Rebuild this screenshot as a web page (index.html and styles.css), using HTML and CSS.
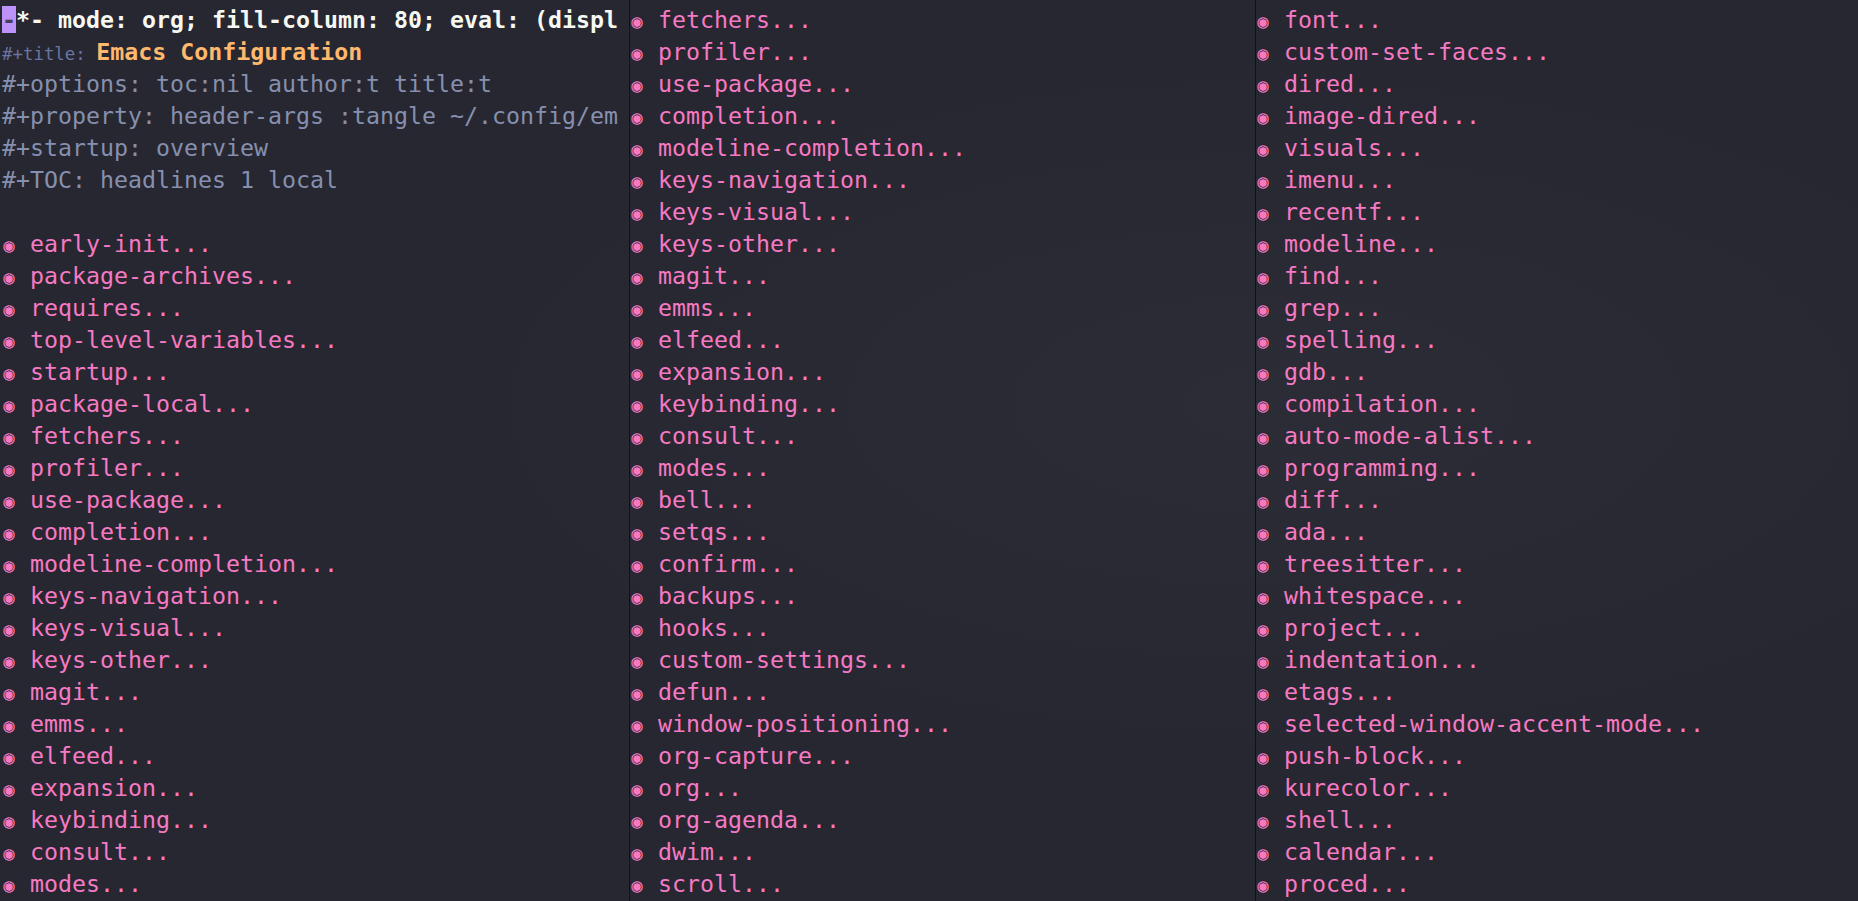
FILE: index.html
```html
<!DOCTYPE html>
<html lang="en">
<head>
<meta charset="utf-8">
<title>Emacs Configuration</title>
<link rel="stylesheet" href="styles.css">
</head>
<body>
<div class="frame">
  <section class="pane pane-left">
    <div class="line header"><span class="cursor">-</span>*- mode: org; fill-column: 80; eval: (displ</div>
    <div class="line"><span class="kw-title">#+title: </span><span class="doc-title">Emacs Configuration</span></div>
    <div class="line meta">#+options: toc:nil author:t title:t</div>
    <div class="line meta">#+property: header-args :tangle ~/.config/em</div>
    <div class="line meta">#+startup: overview</div>
    <div class="line meta">#+TOC: headlines 1 local</div>
    <div class="line"></div>
    <div class="line item"><span class="bullet">◉</span> early-init...</div>
    <div class="line item"><span class="bullet">◉</span> package-archives...</div>
    <div class="line item"><span class="bullet">◉</span> requires...</div>
    <div class="line item"><span class="bullet">◉</span> top-level-variables...</div>
    <div class="line item"><span class="bullet">◉</span> startup...</div>
    <div class="line item"><span class="bullet">◉</span> package-local...</div>
    <div class="line item"><span class="bullet">◉</span> fetchers...</div>
    <div class="line item"><span class="bullet">◉</span> profiler...</div>
    <div class="line item"><span class="bullet">◉</span> use-package...</div>
    <div class="line item"><span class="bullet">◉</span> completion...</div>
    <div class="line item"><span class="bullet">◉</span> modeline-completion...</div>
    <div class="line item"><span class="bullet">◉</span> keys-navigation...</div>
    <div class="line item"><span class="bullet">◉</span> keys-visual...</div>
    <div class="line item"><span class="bullet">◉</span> keys-other...</div>
    <div class="line item"><span class="bullet">◉</span> magit...</div>
    <div class="line item"><span class="bullet">◉</span> emms...</div>
    <div class="line item"><span class="bullet">◉</span> elfeed...</div>
    <div class="line item"><span class="bullet">◉</span> expansion...</div>
    <div class="line item"><span class="bullet">◉</span> keybinding...</div>
    <div class="line item"><span class="bullet">◉</span> consult...</div>
    <div class="line item"><span class="bullet">◉</span> modes...</div>
  </section>
  <section class="pane pane-mid">
    <div class="line item"><span class="bullet">◉</span> fetchers...</div>
    <div class="line item"><span class="bullet">◉</span> profiler...</div>
    <div class="line item"><span class="bullet">◉</span> use-package...</div>
    <div class="line item"><span class="bullet">◉</span> completion...</div>
    <div class="line item"><span class="bullet">◉</span> modeline-completion...</div>
    <div class="line item"><span class="bullet">◉</span> keys-navigation...</div>
    <div class="line item"><span class="bullet">◉</span> keys-visual...</div>
    <div class="line item"><span class="bullet">◉</span> keys-other...</div>
    <div class="line item"><span class="bullet">◉</span> magit...</div>
    <div class="line item"><span class="bullet">◉</span> emms...</div>
    <div class="line item"><span class="bullet">◉</span> elfeed...</div>
    <div class="line item"><span class="bullet">◉</span> expansion...</div>
    <div class="line item"><span class="bullet">◉</span> keybinding...</div>
    <div class="line item"><span class="bullet">◉</span> consult...</div>
    <div class="line item"><span class="bullet">◉</span> modes...</div>
    <div class="line item"><span class="bullet">◉</span> bell...</div>
    <div class="line item"><span class="bullet">◉</span> setqs...</div>
    <div class="line item"><span class="bullet">◉</span> confirm...</div>
    <div class="line item"><span class="bullet">◉</span> backups...</div>
    <div class="line item"><span class="bullet">◉</span> hooks...</div>
    <div class="line item"><span class="bullet">◉</span> custom-settings...</div>
    <div class="line item"><span class="bullet">◉</span> defun...</div>
    <div class="line item"><span class="bullet">◉</span> window-positioning...</div>
    <div class="line item"><span class="bullet">◉</span> org-capture...</div>
    <div class="line item"><span class="bullet">◉</span> org...</div>
    <div class="line item"><span class="bullet">◉</span> org-agenda...</div>
    <div class="line item"><span class="bullet">◉</span> dwim...</div>
    <div class="line item"><span class="bullet">◉</span> scroll...</div>
  </section>
  <section class="pane pane-right">
    <div class="line item"><span class="bullet">◉</span> font...</div>
    <div class="line item"><span class="bullet">◉</span> custom-set-faces...</div>
    <div class="line item"><span class="bullet">◉</span> dired...</div>
    <div class="line item"><span class="bullet">◉</span> image-dired...</div>
    <div class="line item"><span class="bullet">◉</span> visuals...</div>
    <div class="line item"><span class="bullet">◉</span> imenu...</div>
    <div class="line item"><span class="bullet">◉</span> recentf...</div>
    <div class="line item"><span class="bullet">◉</span> modeline...</div>
    <div class="line item"><span class="bullet">◉</span> find...</div>
    <div class="line item"><span class="bullet">◉</span> grep...</div>
    <div class="line item"><span class="bullet">◉</span> spelling...</div>
    <div class="line item"><span class="bullet">◉</span> gdb...</div>
    <div class="line item"><span class="bullet">◉</span> compilation...</div>
    <div class="line item"><span class="bullet">◉</span> auto-mode-alist...</div>
    <div class="line item"><span class="bullet">◉</span> programming...</div>
    <div class="line item"><span class="bullet">◉</span> diff...</div>
    <div class="line item"><span class="bullet">◉</span> ada...</div>
    <div class="line item"><span class="bullet">◉</span> treesitter...</div>
    <div class="line item"><span class="bullet">◉</span> whitespace...</div>
    <div class="line item"><span class="bullet">◉</span> project...</div>
    <div class="line item"><span class="bullet">◉</span> indentation...</div>
    <div class="line item"><span class="bullet">◉</span> etags...</div>
    <div class="line item"><span class="bullet">◉</span> selected-window-accent-mode...</div>
    <div class="line item"><span class="bullet">◉</span> push-block...</div>
    <div class="line item"><span class="bullet">◉</span> kurecolor...</div>
    <div class="line item"><span class="bullet">◉</span> shell...</div>
    <div class="line item"><span class="bullet">◉</span> calendar...</div>
    <div class="line item"><span class="bullet">◉</span> proced...</div>
  </section>
</div>
</body>
</html>
```

FILE: styles.css
```css
html, body {
  margin: 0;
  padding: 0;
  height: 100%;
  overflow: hidden;
}

body {
  background-color: #262731;
  background-image: radial-gradient(ellipse 45% 40% at 68% 45%, #2b2c36 0%, rgba(38, 39, 49, 0) 100%);
  font-family: "DejaVu Sans Mono", "Liberation Mono", monospace;
  font-size: 23.25px;
  color: #f8f8f2;
}

.frame {
  display: flex;
  height: 901px;
}

.pane {
  box-sizing: border-box;
  padding-top: 4px;
  overflow: hidden;
  flex: none;
}

.pane-left {
  width: 630px;
  padding-left: 2px;
  border-right: 1px solid #111217;
}

.pane-mid {
  width: 626px;
  padding-left: 0;
  border-right: 1px solid #111217;
}

.pane-right {
  flex: 1;
  padding-left: 0;
}

.line {
  height: 32px;
  line-height: 32px;
  white-space: pre;
  overflow: hidden;
}

.header {
  font-weight: bold;
  color: #f8f8f2;
}

.cursor {
  background: #bd93f9;
  color: #44425a;
}

.kw-title {
  font-size: 17.4px;
  color: #6a75a0;
}

.doc-title {
  font-weight: bold;
  color: #ffb86c;
}

.meta {
  color: #8690ae;
}

.item {
  color: #f67ac3;
}

.bullet {
  display: inline-block;
  width: 14px;
  text-align: center;
  font-size: 19px;
  vertical-align: top;
  line-height: 35px;
}
```
